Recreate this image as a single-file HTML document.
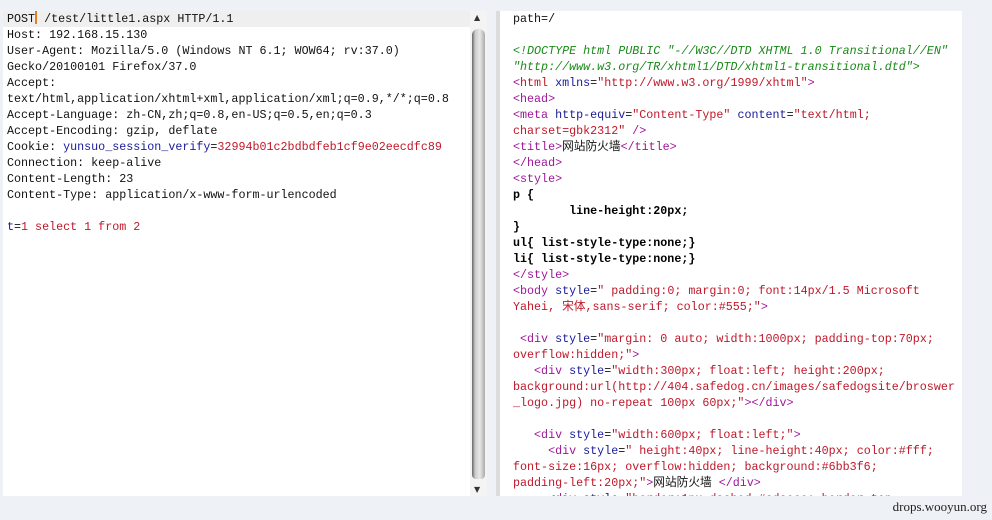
<!DOCTYPE html>
<html><head><meta charset="utf-8"><style>
body{margin:0;width:992px;height:520px;background:#eef1f6;position:relative;overflow:hidden;font-family:"Liberation Mono","Noto Sans CJK SC",monospace;font-size:11.7px;}
.pane{position:absolute;background:#fff;top:11px;height:485px;overflow:hidden;}
#l{left:3px;width:467px;}
#r{left:500px;width:462px;}
.t{position:absolute;white-space:pre;line-height:16px;color:#111;}
#l .t{left:4px;top:0;}
#r .t{left:13px;top:0;}
.hl{background:#efefef;display:inline-block;width:463px;margin-left:-4px;padding-left:4px;}
.b{color:#1a1a9a}.v{color:#c0182a}.g{color:#188a18;font-style:italic}.p{color:#a0169a}.k{font-weight:bold;color:#000}
#sb{position:absolute;left:470px;top:11px;width:17px;height:485px;background:#f4f4f4;}
#th{position:absolute;left:2px;top:18px;width:13px;height:450px;border-radius:6px 6px 4px 4px;background:linear-gradient(90deg,#666,#ccc 25%,#e8e8e8 60%,#aaa);}
.ar{position:absolute;left:4px;font-size:8px;color:#333;font-family:"DejaVu Sans",sans-serif;}
#sp{position:absolute;left:496px;top:11px;width:4px;height:485px;background:#dcdcdc;}
#wm{position:absolute;right:5px;top:499px;font-family:"Liberation Serif",serif;font-size:13px;color:#222;}
.cur{display:inline-block;width:2px;height:13px;background:#e08020;vertical-align:-2px;}
</style></head><body>
<div class="pane" id="l"><div class="t"><span class="hl">POST<span class="cur"></span> /test/little1.aspx HTTP/1.1</span>
Host: 192.168.15.130
User-Agent: Mozilla/5.0 (Windows NT 6.1; WOW64; rv:37.0)
Gecko/20100101 Firefox/37.0
Accept:
text/html,application/xhtml+xml,application/xml;q=0.9,*/*;q=0.8
Accept-Language: zh-CN,zh;q=0.8,en-US;q=0.5,en;q=0.3
Accept-Encoding: gzip, deflate
Cookie: <span class="b">yunsuo_session_verify</span>=<span class="v">32994b01c2bdbdfeb1cf9e02eecdfc89</span>
Connection: keep-alive
Content-Length: 23
Content-Type: application/x-www-form-urlencoded

<span class="b">t</span>=<span class="v">1 select 1 from 2</span></div></div>
<div id="sb"><div class="ar" style="top:2px">▲</div><div id="th"></div><div class="ar" style="bottom:2px">▼</div></div>
<div id="sp"></div>
<div class="pane" id="r"><div class="t">path=/

<span class="g">&lt;!DOCTYPE html PUBLIC "-//W3C//DTD XHTML 1.0 Transitional//EN"
"http://www.w3.org/TR/xhtml1/DTD/xhtml1-transitional.dtd"&gt;</span>
<span class="p">&lt;</span><span class="v">html</span> <span class="b">xmlns</span>=<span class="v">"http://www.w3.org/1999/xhtml"</span><span class="p">&gt;</span>
<span class="p">&lt;head&gt;</span>
<span class="p">&lt;meta</span> <span class="b">http-equiv</span>=<span class="v">"Content-Type"</span> <span class="b">content</span>=<span class="v">"text/html;
charset=gbk2312"</span> <span class="p">/&gt;</span>
<span class="p">&lt;title&gt;</span>网站防火墙<span class="p">&lt;/title&gt;</span>
<span class="p">&lt;/head&gt;</span>
<span class="p">&lt;style&gt;</span>
<span class="k">p {
        line-height:20px;
}
ul{ list-style-type:none;}
li{ list-style-type:none;}</span>
<span class="p">&lt;/style&gt;</span>
<span class="p">&lt;body</span> <span class="b">style</span>=<span class="v">" padding:0; margin:0; font:14px/1.5 Microsoft
Yahei, 宋体,sans-serif; color:#555;"</span><span class="p">&gt;</span>

 <span class="p">&lt;div</span> <span class="b">style</span>=<span class="v">"margin: 0 auto; width:1000px; padding-top:70px;
overflow:hidden;"</span><span class="p">&gt;</span>
   <span class="p">&lt;div</span> <span class="b">style</span>=<span class="v">"width:300px; float:left; height:200px;
background:url(http://404.safedog.cn/images/safedogsite/broswer
_logo.jpg) no-repeat 100px 60px;"</span><span class="p">&gt;&lt;/div&gt;</span>

   <span class="p">&lt;div</span> <span class="b">style</span>=<span class="v">"width:600px; float:left;"</span><span class="p">&gt;</span>
     <span class="p">&lt;div</span> <span class="b">style</span>=<span class="v">" height:40px; line-height:40px; color:#fff;
font-size:16px; overflow:hidden; background:#6bb3f6;
padding-left:20px;"</span><span class="p">&gt;</span>网站防火墙 <span class="p">&lt;/div&gt;</span>
     <span class="p">&lt;div</span> <span class="b">style</span>=<span class="v">"border:1px dashed #cdcece; border-top</span></div></div>
<div id="wm">drops.wooyun.org</div>
</body></html>
